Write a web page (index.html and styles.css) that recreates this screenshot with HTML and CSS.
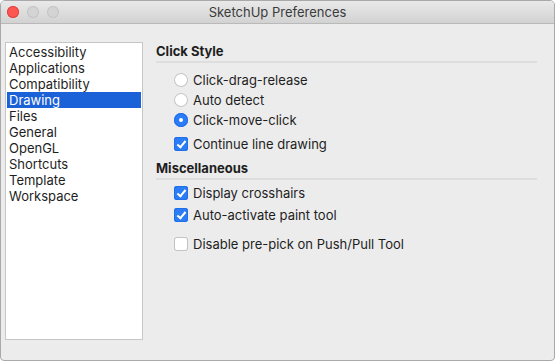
FILE: index.html
```html
<!DOCTYPE html>
<html lang="en">
<head>
    <meta charset="UTF-8">
    <title>SketchUp Preferences</title>
    <link rel="stylesheet" href="styles.css">
</head>
<body>
    <div class="window">
        <div class="titlebar">
            <div class="lights">
                <span class="light close"></span>
                <span class="light"></span>
                <span class="light"></span>
            </div>
            <div class="title">SketchUp Preferences</div>
        </div>
        <div class="content">
            <ul class="list">
                <li>Accessibility</li>
                <li>Applications</li>
                <li>Compatibility</li>
                <li class="selected">Drawing</li>
                <li>Files</li>
                <li>General</li>
                <li>OpenGL</li>
                <li>Shortcuts</li>
                <li>Template</li>
                <li>Workspace</li>
            </ul>
            <div class="panel">
                <h3 class="section">Click Style</h3>
                <div class="options click-style">
                    <label class="option"><span class="radio"></span>Click-drag-release</label>
                    <label class="option"><span class="radio"></span>Auto detect</label>
                    <label class="option"><span class="radio on"></span>Click-move-click</label>
                    <label class="option gap"><span class="check on"></span>Continue line drawing</label>
                </div>
                <h3 class="section">Miscellaneous</h3>
                <div class="options misc">
                    <label class="option tall"><span class="check on"></span>Display crosshairs</label>
                    <label class="option tall"><span class="check on"></span>Auto-activate paint tool</label>
                    <label class="option tall gap"><span class="check"></span>Disable pre-pick on Push/Pull Tool</label>
                </div>
            </div>
        </div>
    </div>
</body>
</html>
```

FILE: styles.css
```css
body {
    margin: 0;
    padding: 0;
    background: #ffffff;
    font-family: Inter, "Liberation Sans", Arial, sans-serif;
    font-size: 13px;
    color: #1e1e1e;
}
.window {
    width: 553px;
    height: 359px;
    border: 1px solid #a9a9a9;
    border-radius: 5px 5px 4px 4px;
    background: #ececec;
    overflow: hidden;
    display: flex;
    flex-direction: column;
}
.titlebar {
    height: 22px;
    background: linear-gradient(#e9e9e9, #d2d2d2);
    border-bottom: 1px solid #b9b9b9;
    display: flex;
    align-items: center;
    position: relative;
}
.lights {
    display: flex;
    gap: 8px;
    padding-left: 6px;
}
.light {
    width: 12px;
    height: 12px;
    border-radius: 50%;
    background: #d4d4d4;
    box-shadow: inset 0 0 0 1px #c4c4c4;
}
.light.close {
    background: #fc5753;
    box-shadow: inset 0 0 0 1px #e0443e;
}
.title {
    position: absolute;
    left: 0;
    right: 0;
    text-align: center;
    color: #3b3b3b;
    font-size: 13px;
}
.content {
    flex: 1;
    display: flex;
    padding: 18px 0 0 4px;
}
.list {
    list-style: none;
    margin: 0;
    padding: 1px 1px;
    width: 134px;
    height: 294px;
    background: #ffffff;
    border: 1px solid #c6c6c6;
}
.list li {
    height: 16px;
    line-height: 16px;
    padding-left: 2px;
}
.list li.selected {
    background: #1b61d8;
    color: #ffffff;
}
.panel {
    flex: 1;
    padding: 1px 17px 0 13px;
}
.section {
    margin: 0;
    font-size: 13px;
    font-weight: bold;
    line-height: 16px;
    padding-bottom: 2px;
    border-bottom: 2px solid #dedede;
}
.options {
    display: flex;
    flex-direction: column;
    padding-left: 18px;
}
.click-style {
    padding-top: 7px;
    padding-bottom: 6px;
}
.misc {
    padding-top: 2px;
}
.option {
    display: flex;
    align-items: center;
    height: 20px;
    gap: 5px;
}
.option.tall {
    height: 22px;
}
.option.gap {
    margin-top: 4px;
}
.misc .option.gap {
    margin-top: 7px;
}
.radio {
    width: 14px;
    height: 14px;
    border-radius: 50%;
    background: #ffffff;
    box-shadow: inset 0 0 0 1px #c3c3c3;
    position: relative;
}
.radio.on {
    background: #2c7cf6;
    box-shadow: inset 0 0 0 1px #1f6fe6;
}
.radio.on::after {
    content: "";
    position: absolute;
    left: 5px;
    top: 5px;
    width: 4px;
    height: 4px;
    border-radius: 50%;
    background: #ffffff;
}
.check {
    width: 14px;
    height: 14px;
    border-radius: 3px;
    background: #ffffff;
    box-shadow: inset 0 0 0 1px #c3c3c3;
    position: relative;
}
.check.on {
    background: #2c7cf6;
    box-shadow: inset 0 0 0 1px #1f6fe6;
}
.check.on::after {
    content: "";
    position: absolute;
    left: 5px;
    top: 2px;
    width: 3px;
    height: 7px;
    border: solid #ffffff;
    border-width: 0 2px 2px 0;
    transform: rotate(40deg);
}
```
